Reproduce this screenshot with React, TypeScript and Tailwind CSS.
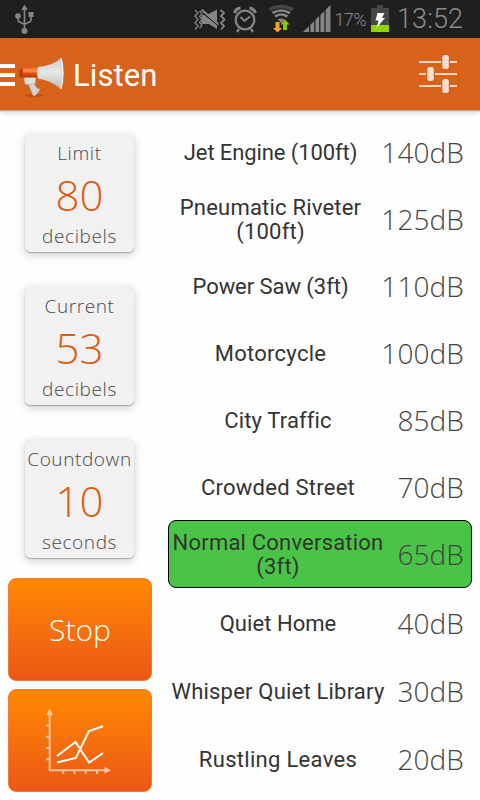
import React from 'react';

const openSans = "font-['Open_Sans',sans-serif] font-light";

const levels = [
  { name: 'Jet Engine (100ft)', db: 140, spacing: 'tracking-[-0.1px]' },
  { name: 'Pneumatic Riveter (100ft)', db: 125, spacing: 'tracking-[0.2px]' },
  { name: 'Power Saw (3ft)', db: 110, spacing: 'tracking-[-0.05px]' },
  { name: 'Motorcycle', db: 100, spacing: 'tracking-[0.25px]' },
  { name: 'City Traffic', db: 85, spacing: 'tracking-[0.15px]' },
  { name: 'Crowded Street', db: 70, spacing: 'tracking-[0.25px]' },
  { name: 'Normal Conversation (3ft)', db: 65, active: true, spacing: 'tracking-[0.2px]' },
  { name: 'Quiet Home', db: 40, spacing: 'tracking-[0.05px]' },
  { name: 'Whisper Quiet Library', db: 30, spacing: 'tracking-[0.2px]' },
  { name: 'Rustling Leaves', db: 20, spacing: 'tracking-[0.3px]' },
];

function StatusBar() {
  return (
    <div className="flex h-[38px] shrink-0 items-start bg-[#1f1f1f] text-[#8c8c8c]">
      <svg className="ml-[14px] mt-[4px] shrink-0" width="22" height="31" viewBox="0 0 22 31" fill="none" stroke="#858585" strokeWidth="1.7">
        <path d="M10.5 5v22M4 12v3.500q0 2 2 2.800l4.500 1.900M17 12v3.500q0 2-2 2.800l-4.500 1.900" />
        <path d="M10.500 0.500L13.800 6H7.200Z" fill="#858585" stroke="none" />
        <circle cx="4" cy="12" r="2.800" fill="#858585" stroke="none" />
        <rect x="14.500" y="8" width="5" height="5" fill="#858585" stroke="none" />
        <circle cx="10.500" cy="27" r="3" fill="#858585" stroke="none" />
      </svg>
      <svg className="ml-[157px] shrink-0" width="196" height="38" viewBox="193 0 196 38" fill="none">
        <g stroke="#858585" strokeWidth="1.8">
          <path d="M195 10l3 3-3 3 3 3.500-3 3.500 3 3-3 3.500M199.500 11l2.500 2.700-2.500 2.700 2.500 3-2.500 3 2.500 3-2.500 3" strokeWidth="1.300" />
          <path d="M220.500 10l3.500 3-3 3 3.500 3.500-3.500 3.500 3 3-3 3.500" />
        </g>
        <path d="M201.500 15h3l12.500 10v4l-8-5h-7.500zM207.500 14.500l9.500-5v12zM200.500 10.500l2-1.500 16 14v3z" fill="#858585" />
        <path d="M201 11.500l17 14" stroke="#1f1f1f" strokeWidth="1" />
        <g stroke="#858585">
          <circle cx="245" cy="20" r="9.300" strokeWidth="2.300" />
          <path d="M240.500 17l4 4 5.500-4.500" strokeWidth="2" />
          <path d="M234.500 13q1.500-4.500 6-5M255.500 13q-1.500-4.500-6-5" strokeWidth="3" />
          <path d="M239 29l-2 3M251 29l2 3" strokeWidth="2.400" />
        </g>
        <path d="M269.500 9.500q11.500-6 23.500 0" stroke="#464646" strokeWidth="3.500" />
        <path d="M272.500 13q8.500-5 17.500 0M275 16.500q6-4 12.500 0" stroke="#858585" strokeWidth="2.700" />
        <path d="M277.500 19.500q3.500-2 7.500 0l-3.700 3.500z" fill="#858585" />
        <path d="M275.500 22h4v6h2.500l-4.500 4.500-4.500-4.500h2.500z" fill="#ff9b2e" />
        <path d="M283 30h4v-5.500h2.500L285 19.500l-4.500 5h2.500z" fill="#86c900" />
        <path d="M303 32L330.500 5v27z" fill="#858585" />
        <path d="M309.700 25v7M314.800 20v12M319.800 15v17M325 10v22" stroke="#1f1f1f" strokeWidth="1.300" />
        <text x="334.500" y="26" textLength="32" fill="#8c8c8c" className="font-['Roboto',sans-serif] text-[18px] font-[350]">17%</text>
        <path d="M371 8h6V5h6v3h6v24h-18z" fill="#464646" />
        <path d="M371 25h18v7h-18z" fill="#8fd400" />
        <path d="M377.500 13h7l-2.500 5h3l-8.500 10 2-7.500h-3z" fill="#fff" />
      </svg>
      <span className="ml-[8px] mt-[3px] font-['Roboto',sans-serif] text-[27px] font-light leading-[32px] tracking-[0.1px]">13:52</span>
    </div>
  );
}

function Megaphone() {
  return (
    <svg width="50" height="44" viewBox="17 56 50 44" className="shrink-0">
      <defs>
        <linearGradient id="horn" x1="0" y1="0" x2="0" y2="1">
          <stop offset="0" stopColor="#c9c9c9" />
          <stop offset="0.450" stopColor="#e8e8e8" />
          <stop offset="1" stopColor="#bcbcbc" />
        </linearGradient>
        <linearGradient id="barrel" x1="0" y1="0" x2="0" y2="1">
          <stop offset="0" stopColor="#e5672d" />
          <stop offset="0.350" stopColor="#ff914d" />
          <stop offset="0.600" stopColor="#e2500f" />
          <stop offset="1" stopColor="#b83908" />
        </linearGradient>
      </defs>
      <ellipse cx="34" cy="96.500" rx="9" ry="1.300" fill="#9e4312" opacity="0.600" />
      <path d="M28 84h7q-1 4 5 6.500l-4.500 6H33z" fill="#d2d2d2" stroke="#b4a59c" strokeWidth="0.500" />
      <path d="M24 78h12l-1 6.500-5 1h-4.500q-1.500-3-1.500-7.500z" fill="#dedede" stroke="#b4a59c" strokeWidth="0.500" />
      <rect x="19" y="70" width="7" height="8.500" rx="2.500" fill="#bc3c0c" />
      <path d="M23 68.500h16v10H24q-2-4.500-1-10z" fill="url(#barrel)" />
      <path d="M38 68q14-1 23-9 4 14 0 31-9-8-23-10.500-2-5 0-11.500z" fill="url(#horn)" />
      <path d="M61 59q4.500 15 0 31" fill="none" stroke="#fafafa" strokeWidth="1.200" />
      <path d="M62.800 58.500q3 16-.3 31" fill="none" stroke="#b5704b" strokeWidth="0.800" />
    </svg>
  );
}

function Header() {
  return (
    <header className="relative z-10 flex h-[72px] shrink-0 items-center bg-[#d8621a] shadow-[0_1px_1px_#aaa,0_2px_6px_rgba(0,0,0,0.2)]">
      <div className="mt-[2px] flex w-[15px] flex-col gap-[5px]">
        <div className="h-[4px] bg-white" />
        <div className="h-[4px] bg-white" />
        <div className="h-[4px] bg-white" />
      </div>
      <div className="ml-[2px] mt-[5px]"><Megaphone /></div>
      <h1 className="ml-[6px] mt-[3px] flex-1 font-['Roboto',sans-serif] text-[31px] leading-[36px] tracking-[0.1px] text-white">Listen</h1>
      <svg className="mr-[22px] shrink-0" width="40" height="40" viewBox="418 54 40 40">
        <path d="M419 62h22M450 62H457M419 74h7M435 74h22M419 86h22M450 86H457" stroke="#f8d5c2" strokeWidth="2" />
        <g fill="#fae0d3">
          <rect x="442.300" y="55" width="6.500" height="14" rx="2.500" />
          <rect x="427.300" y="67" width="6.500" height="14" rx="2.500" />
          <rect x="442.300" y="79" width="6.500" height="14" rx="2.500" />
        </g>
      </svg>
    </header>
  );
}

function Card({ label, value, unit }: { label: string; value: number; unit: string }) {
  return (
    <div className={`${openSans} flex h-[119px] w-[109px] flex-col items-center rounded-[5px] bg-[#f1f1f1] text-[#484848] shadow-[0_1px_1px_rgba(0,0,0,0.25),0_3px_10px_rgba(0,0,0,0.19)]`}>
      <div className="mt-[6px] whitespace-nowrap text-[19px] leading-[28px] tracking-[0.6px]">{label}</div>
      <div className="text-[42px] leading-[55px] text-[#dd5c0e]">{value}</div>
      <div className="whitespace-nowrap text-[19px] leading-[28px] tracking-[0.6px]">{unit}</div>
    </div>
  );
}

const buttonStyle =
  'flex h-[103px] w-[144px] items-center justify-center rounded-[8px] border border-[#f47a3c] bg-linear-to-b from-[#ff8800] to-[#eb5714]';

function ChartIcon() {
  return (
    <svg className="mr-[4px]" width="66" height="68" viewBox="45 708 66 68" fill="none">
      <path d="M49.700 714v57.300H106" stroke="#fcc59c" strokeWidth="2" />
      <path d="M49.700 709.500l3.500 6.500h-7zM111 771.300l-6.500-3.500v7z" fill="#fcc59c" />
      <path d="M46 726.500h4M46 737.700h4M46 749h4M46 760.300h4M63.200 771v4M74.500 771v4M85.700 771v4M97 771v4" stroke="#fcc59c" strokeWidth="2" />
      <path d="M57 763.500l18.800-4.500L89 732l14-4.700M57 757l18.500-14L89 763.500l14-9.300" stroke="white" strokeWidth="2" />
    </svg>
  );
}

export default function App() {
  return (
    <div className="flex h-[800px] w-[480px] flex-col overflow-hidden bg-[#fefefe]">
      <StatusBar />
      <Header />
      <main className="flex flex-1 gap-[16px] px-[8px]">
        <section className="flex w-[144px] flex-col">
          <div className="ml-[17px] mt-[23px] flex flex-col gap-[34px]">
            <Card label="Limit" value={80} unit="decibels" />
            <Card label="Current" value={53} unit="decibels" />
            <Card label="Countdown" value={10} unit="seconds" />
          </div>
          <button className={`${buttonStyle} ${openSans} mt-[20px] text-[30px] text-white`}>Stop</button>
          <button className={`${buttonStyle} mt-[8px]`} aria-label="Chart">
            <ChartIcon />
          </button>
        </section>
        <section className="mt-[8px] w-[304px] text-[#333]">
          {levels.map((level, i) => (
            <div
              key={level.name}
              className={`${i < 6 ? 'h-[67px]' : 'h-[68px]'} ${i > 6 ? 'pt-[2px]' : 'pt-0'} ${level.active ? 'rounded-[8px] border-black bg-[#49c446]' : 'border-transparent'} flex items-center justify-between border pr-[7px]`}
            >
              <div className={`${level.db >= 100 ? 'w-[203px]' : 'w-[218px]'} ${level.spacing} shrink-0 pt-[2px] text-center font-['Roboto',sans-serif] text-[22px] font-[380] leading-[24px]`}>
                {level.name}
              </div>
              <div className={`${openSans} whitespace-nowrap text-[28px] leading-[38px] tracking-[0.1px] text-[#444]`}>{level.db}dB</div>
            </div>
          ))}
        </section>
      </main>
    </div>
  );
}
